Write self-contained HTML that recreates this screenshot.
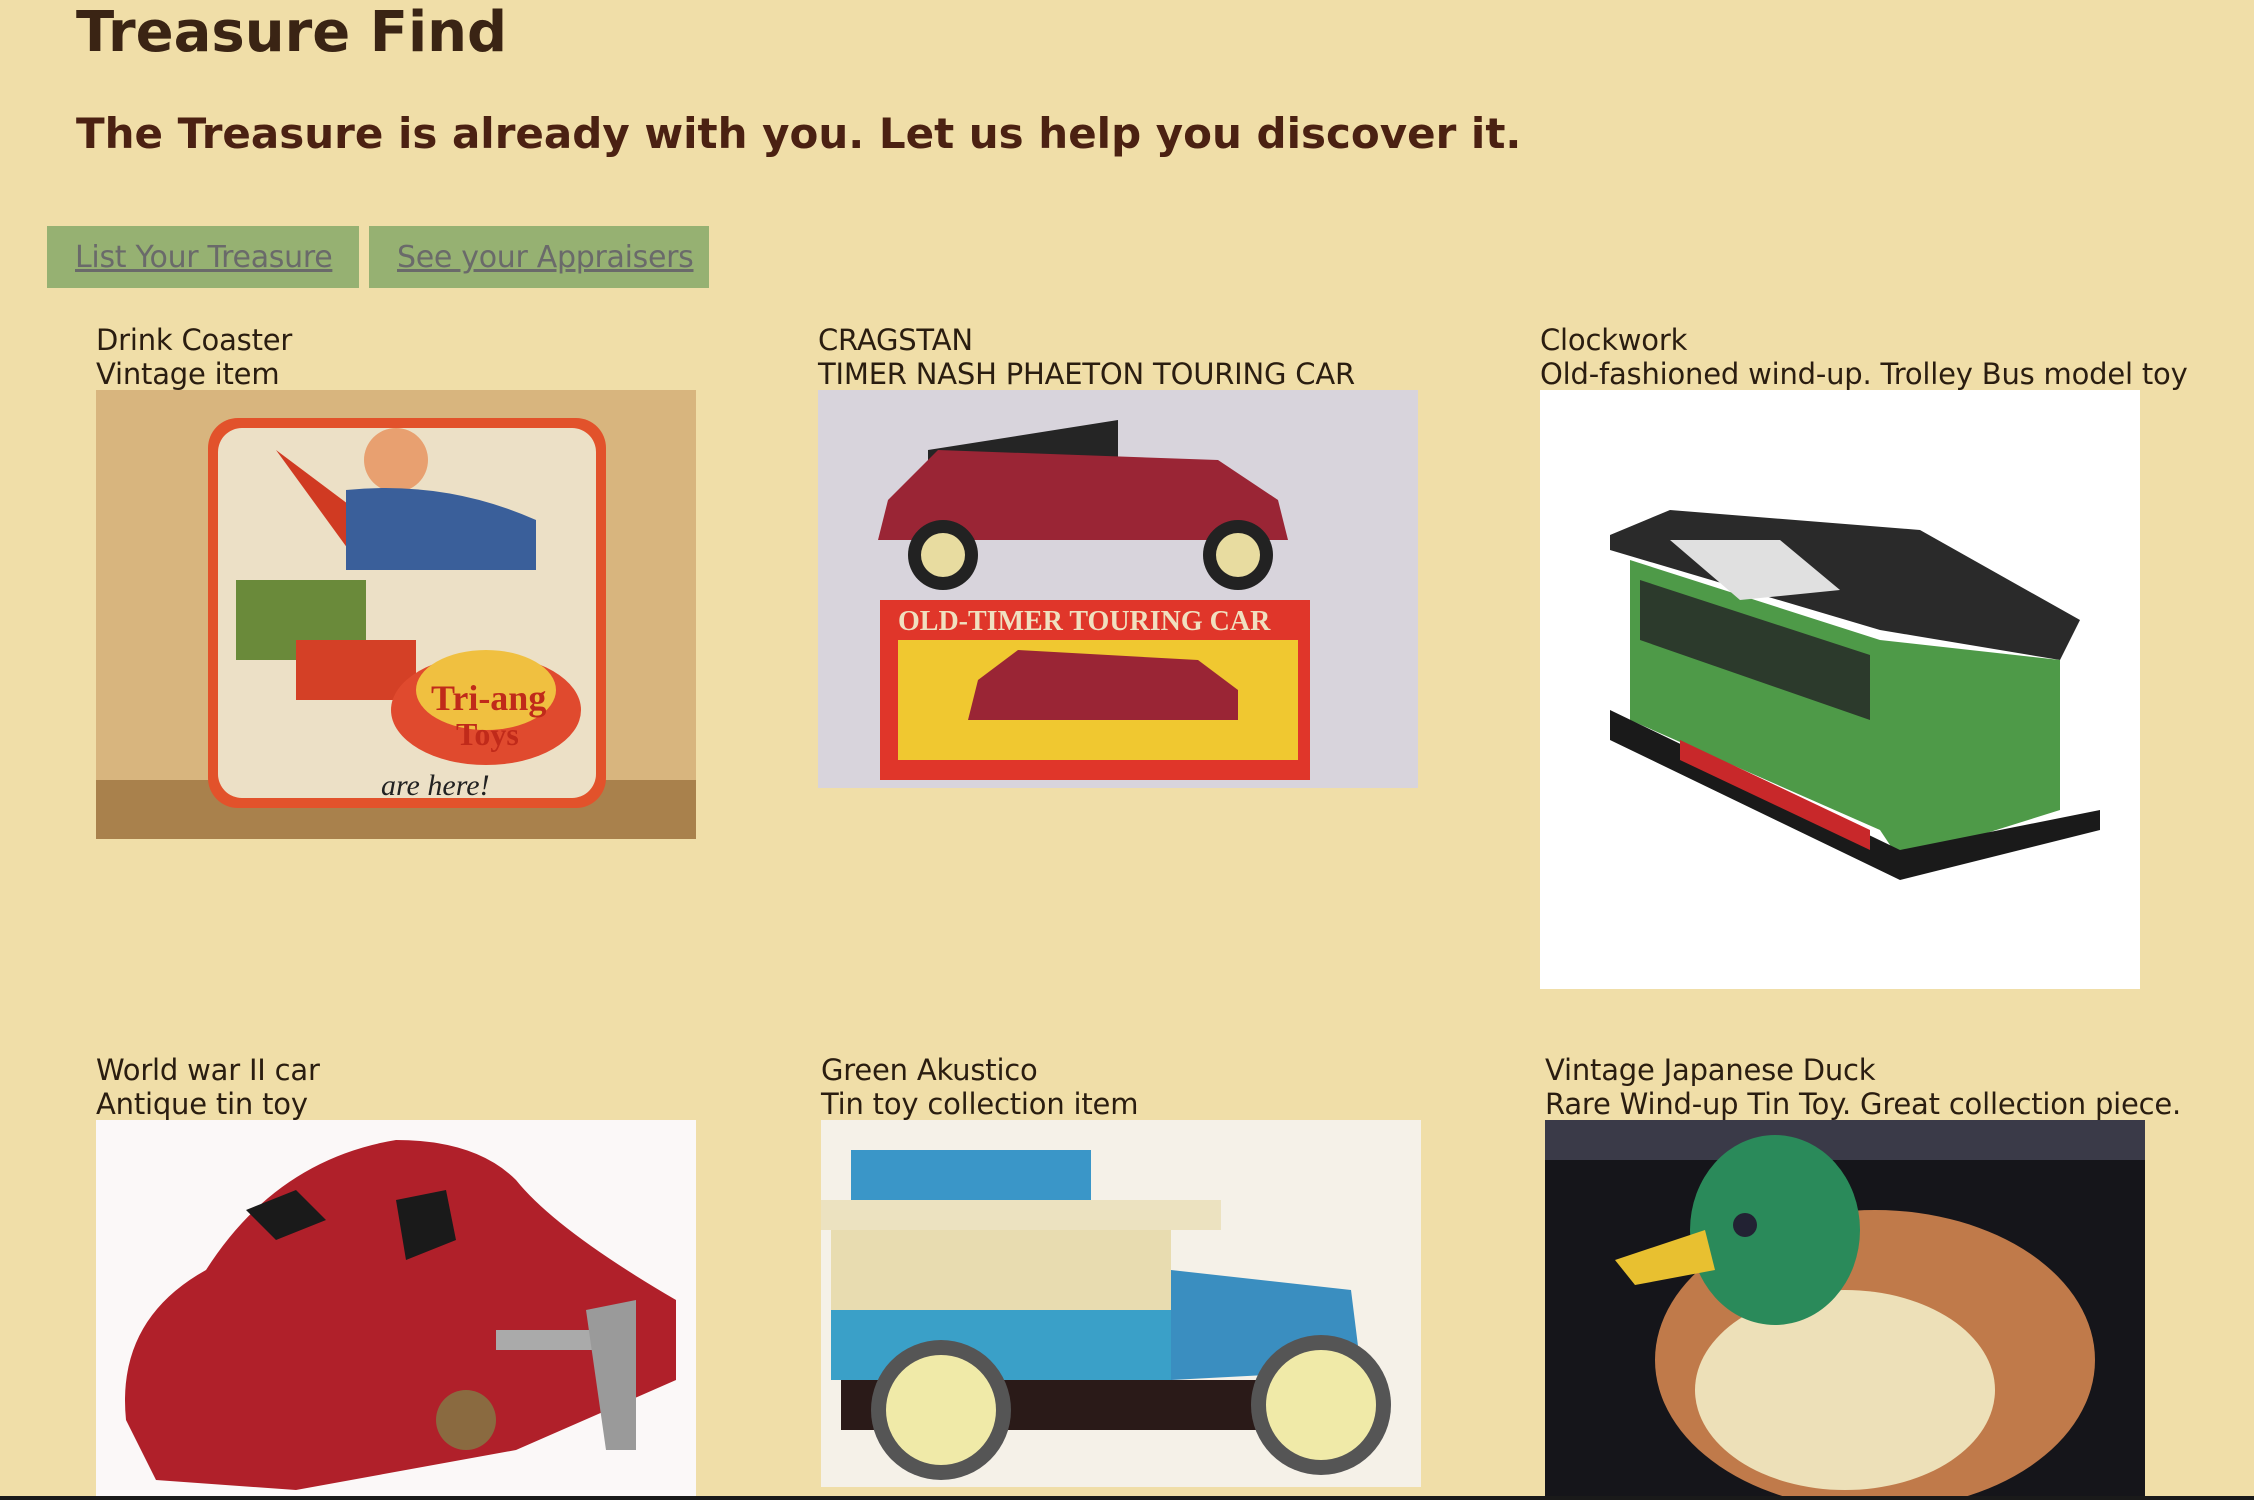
<!DOCTYPE html>
<html><head><meta charset="utf-8"><style>
html,body{margin:0;padding:0}
body{width:2254px;height:1500px;background:#f0dea8;position:relative;overflow:hidden;font-family:"DejaVu Sans","Liberation Sans",sans-serif;color:#2a1d10}
.a{position:absolute}
h1{position:absolute;left:76px;top:0px;margin:0;font-size:56px;font-weight:bold;color:#3a2414;white-space:nowrap}
h2{position:absolute;left:76px;top:109px;margin:0;font-size:42px;font-weight:bold;color:#4b2112;white-space:nowrap}
.btn{position:absolute;top:226px;height:62px;background:#96b172}
.btn a{position:absolute;left:28px;top:14px;font-size:30px;color:#6a6a6a;text-decoration:underline;white-space:nowrap;letter-spacing:-0.3px}
.cap{position:absolute;font-size:29px;line-height:34px;white-space:nowrap;color:#2a1d10;letter-spacing:-0.2px}
svg{position:absolute;display:block}
</style></head><body>
<h1>Treasure Find</h1>
<h2>The Treasure is already with you. Let us help you discover it.</h2>
<div class="btn" style="left:47px;width:312px"><a>List Your Treasure</a></div>
<div class="btn" style="left:369px;width:340px"><a>See your Appraisers</a></div>

<div class="cap" style="left:96px;top:323px">Drink Coaster<br>Vintage item</div>
<div class="cap" style="left:818px;top:323px">CRAGSTAN<br>TIMER NASH PHAETON TOURING CAR</div>
<div class="cap" style="left:1540px;top:323px">Clockwork<br>Old-fashioned wind-up. Trolley Bus model toy</div>

<svg style="left:96px;top:390px" width="600" height="449" viewBox="0 0 600 449">
<rect width="600" height="449" fill="#d8b57e"/>
<rect y="390" width="600" height="59" fill="#a9814c"/>
<rect x="112" y="28" width="398" height="390" rx="30" fill="#e2522b"/>
<rect x="122" y="38" width="378" height="370" rx="24" fill="#ece0c6"/>
<path d="M180 60 L300 150 L260 170 Z" fill="#d03a22"/>
<circle cx="300" cy="70" r="32" fill="#e8a070"/>
<path d="M250 100 Q350 90 440 130 L440 180 L250 180Z" fill="#3a5f9a"/>
<rect x="140" y="190" width="130" height="80" fill="#6a8a3a"/>
<rect x="200" y="250" width="120" height="60" fill="#d44026"/>
<ellipse cx="390" cy="320" rx="95" ry="55" fill="#e04a2e"/>
<ellipse cx="390" cy="300" rx="70" ry="40" fill="#f0c040"/>
<text x="335" y="320" font-size="36" font-weight="bold" fill="#c02a1a" font-family="Liberation Serif,serif">Tri-ang</text>
<text x="360" y="355" font-size="32" font-weight="bold" fill="#c02a1a" font-family="Liberation Serif,serif">Toys</text>
<text x="285" y="405" font-size="30" font-style="italic" fill="#222" font-family="Liberation Serif,serif">are here!</text>
</svg>

<svg style="left:818px;top:390px" width="600" height="398" viewBox="0 0 600 398">
<rect width="600" height="398" fill="#d8d4dc"/>
<path d="M110 60 L300 30 L300 80 L110 90Z" fill="#252525"/>
<path d="M70 110 L120 60 L400 70 L460 110 L470 150 L60 150Z" fill="#9a2535"/>
<circle cx="125" cy="165" r="35" fill="#222"/><circle cx="125" cy="165" r="22" fill="#e8dca0"/>
<circle cx="420" cy="165" r="35" fill="#222"/><circle cx="420" cy="165" r="22" fill="#e8dca0"/>
<rect x="62" y="210" width="430" height="180" fill="#e0362a"/>
<rect x="80" y="250" width="400" height="120" fill="#f0c830"/>
<path d="M160 290 L200 260 L380 270 L420 300 L420 330 L150 330Z" fill="#9a2535"/>
<text x="80" y="240" font-size="28" font-weight="bold" fill="#f0e0c0" font-family="Liberation Serif,serif">OLD-TIMER TOURING CAR</text>
</svg>

<svg style="left:1540px;top:390px" width="600" height="599" viewBox="0 0 600 599">
<rect width="600" height="599" fill="#fff"/>
<path d="M70 145 L130 120 L380 140 L540 230 L520 270 L340 240 L70 160Z" fill="#2a2a2a"/>
<path d="M90 170 L340 250 L340 440 L90 330Z" fill="#4e9a48"/>
<path d="M340 250 L520 270 L520 420 L360 470 L340 440Z" fill="#4e9a48"/>
<path d="M100 190 L330 265 L330 330 L100 250Z" fill="#2c3a2c"/>
<path d="M70 320 L360 460 L560 420 L560 440 L360 490 L70 350Z" fill="#1a1a1a"/>
<path d="M140 350 L330 440 L330 460 L140 370Z" fill="#c8282a"/>
<path d="M130 150 L240 150 L300 200 L200 210Z" fill="#e0e0e0"/>
</svg>

<div class="cap" style="left:96px;top:1053px">World war II car<br>Antique tin toy</div>
<div class="cap" style="left:821px;top:1053px">Green Akustico<br>Tin toy collection item</div>
<div class="cap" style="left:1545px;top:1053px">Vintage Japanese Duck<br>Rare Wind-up Tin Toy. Great collection piece.</div>

<svg style="left:96px;top:1120px" width="600" height="380" viewBox="0 0 600 380">
<rect width="600" height="380" fill="#fbf8f8"/>
<path d="M30 300 Q20 200 110 150 Q180 40 300 20 Q380 20 420 60 Q460 110 580 180 L580 260 L420 330 L200 370 L60 360Z" fill="#b0202a"/>
<path d="M150 90 L200 70 L230 100 L180 120Z" fill="#1a1a1a"/>
<path d="M300 80 L350 70 L360 120 L310 140Z" fill="#1a1a1a"/>
<rect x="400" y="210" width="120" height="20" fill="#aaa"/>
<path d="M490 190 L540 180 L540 330 L510 330Z" fill="#9a9a9a"/>
<circle cx="370" cy="300" r="30" fill="#8a6a40"/>
</svg>

<svg style="left:821px;top:1120px" width="600" height="367" viewBox="0 0 600 367">
<rect width="600" height="367" fill="#f5f1e8"/>
<rect x="30" y="30" width="240" height="60" fill="#3a96c8"/>
<rect x="0" y="80" width="400" height="30" fill="#ece2c0"/>
<rect x="10" y="110" width="340" height="150" fill="#e8dcb0"/>
<rect x="10" y="190" width="340" height="70" fill="#3aa0c8"/>
<path d="M350 150 L530 170 L540 250 L350 260Z" fill="#3a8ec0"/>
<rect x="20" y="260" width="530" height="50" fill="#2a1a18"/>
<circle cx="120" cy="290" r="70" fill="#555"/><circle cx="120" cy="290" r="55" fill="#f0eaa8"/>
<circle cx="500" cy="285" r="70" fill="#555"/><circle cx="500" cy="285" r="55" fill="#f0eaa8"/>
</svg>

<svg style="left:1545px;top:1120px" width="600" height="380" viewBox="0 0 600 380">
<rect width="600" height="380" fill="#15151a"/>
<rect width="600" height="40" fill="#3a3a48"/>
<ellipse cx="330" cy="240" rx="220" ry="150" fill="#c07a4a"/>
<ellipse cx="300" cy="270" rx="150" ry="100" fill="#ede0b8"/>
<ellipse cx="230" cy="110" rx="85" ry="95" fill="#2a8a5a"/>
<path d="M70 140 L160 110 L170 150 L90 165Z" fill="#e8c030"/>
<circle cx="200" cy="105" r="12" fill="#223"/>
</svg>

<div class="a" style="left:0;top:1496px;width:2254px;height:4px;background:#1a1a1a"></div>
</body></html>
